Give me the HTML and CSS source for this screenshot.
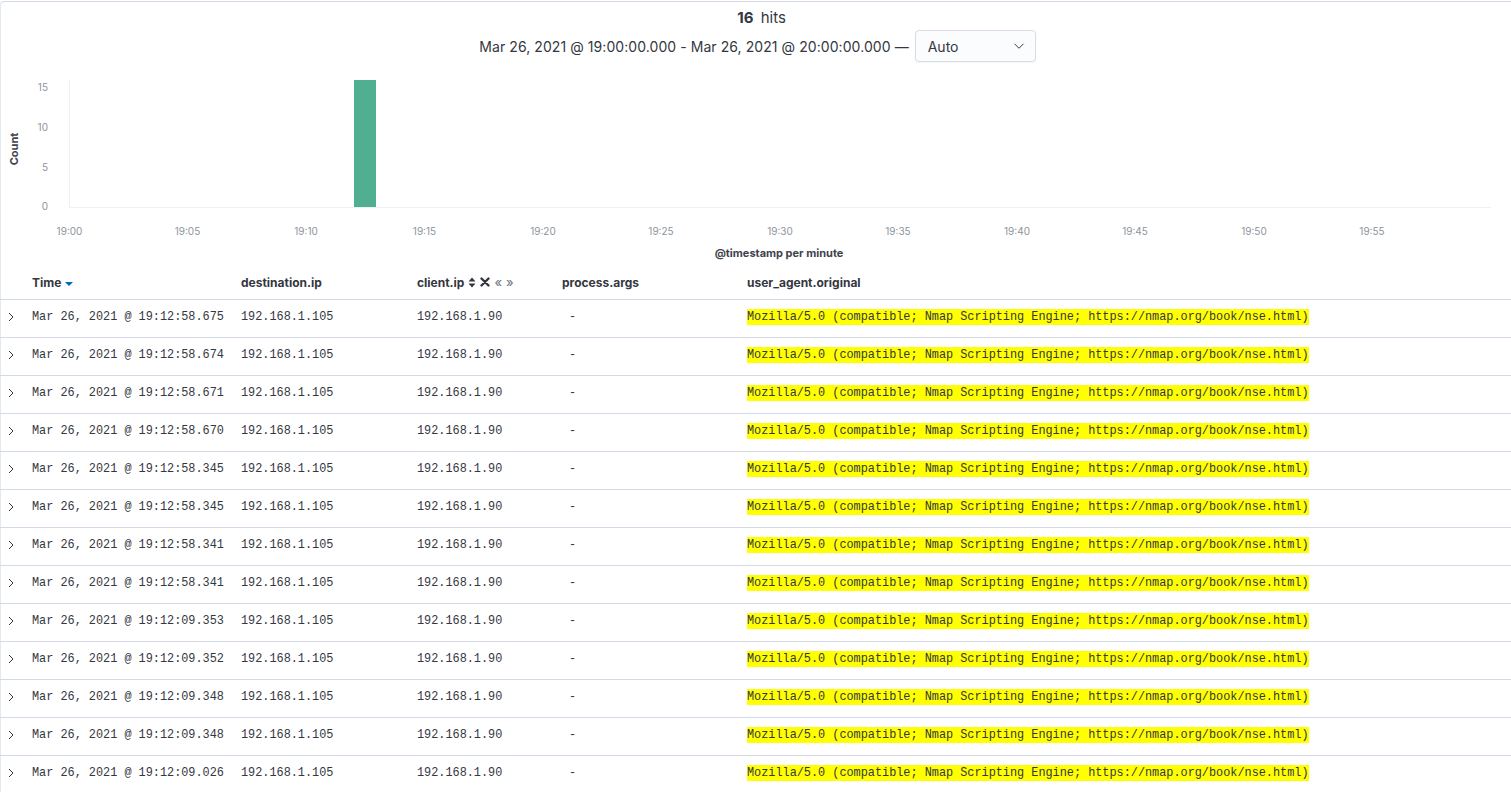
FILE: index.html
```html
<!DOCTYPE html>
<html>
<head>
<meta charset="utf-8">
<link rel="stylesheet" href="styles.css">
</head>
<body>
<div class="panel">
  <div class="summary">
    <div class="hits"><strong>16</strong> hits</div>
    <div class="range">
      <span>Mar 26, 2021 @ 19:00:00.000 - Mar 26, 2021 @ 20:00:00.000 —</span>
      <div class="select"><span>Auto</span>
        <svg width="12" height="12" viewBox="0 0 16 16"><path d="M2 5l6 6 6-6" fill="none" stroke="#343741" stroke-width="1.3"/></svg>
      </div>
    </div>
  </div>
  <svg class="chart" width="1511" height="200" viewBox="0 0 1511 200">
    <line x1="69.5" y1="15" x2="69.5" y2="142" stroke="#eef0f3" stroke-width="1"/>
    <line x1="69" y1="142.5" x2="1491" y2="142.5" stroke="#eef0f3" stroke-width="1"/>
    <rect x="354" y="15" width="22" height="127" fill="#50ae91"/>
    <g class="ytick" text-anchor="end">
      <text x="48" y="26">15</text>
      <text x="48" y="66">10</text>
      <text x="48" y="106">5</text>
      <text x="48" y="145">0</text>
    </g>
    <text class="ytitle" transform="translate(18 84) rotate(-90)" text-anchor="middle">Count</text>
    <g class="xtick" text-anchor="middle">
      <text x="69.5" y="170">19:00</text>
      <text x="187.5" y="170">19:05</text>
      <text x="306" y="170">19:10</text>
      <text x="424.5" y="170">19:15</text>
      <text x="543" y="170">19:20</text>
      <text x="661" y="170">19:25</text>
      <text x="780" y="170">19:30</text>
      <text x="898" y="170">19:35</text>
      <text x="1017" y="170">19:40</text>
      <text x="1135" y="170">19:45</text>
      <text x="1254" y="170">19:50</text>
      <text x="1372" y="170">19:55</text>
    </g>
    <text class="xtitle" x="779" y="192" text-anchor="middle">@timestamp per minute</text>
  </svg>
  <div class="table">
    <div class="row head">
      <div class="cell toggle"></div>
      <div class="cell">Time <span class="sortdown"></span></div>
      <div class="cell">destination.ip</div>
      <div class="cell">client.ip <span class="ico">
        <svg width="8" height="11" viewBox="0 0 8 11"><path d="M4 0.5L7.5 4.5H0.5z M4 10.5L7.5 6.5H0.5z" fill="#343741"/></svg>
        <svg width="10" height="10" viewBox="0 0 10 10"><path d="M1.5 1.5l7 7M8.5 1.5l-7 7" stroke="#343741" stroke-width="2.4" stroke-linecap="round"/></svg>
        <span class="arr">«</span><span class="arr">»</span></span></div>
      <div class="cell">process.args</div>
      <div class="cell">user_agent.original</div>
    </div>
    <div id="rows"></div>
  </div>
</div>
<script src="script.js"></script>
</body>
</html>
```

FILE: script.js
```js
const times = [
  "19:12:58.675","19:12:58.674","19:12:58.671","19:12:58.670","19:12:58.345",
  "19:12:58.345","19:12:58.341","19:12:58.341","19:12:09.353","19:12:09.352",
  "19:12:09.348","19:12:09.348","19:12:09.026"
];
const ua = "Mozilla/5.0 (compatible; Nmap Scripting Engine; https://nmap.org/book/nse.html)";
const rows = document.getElementById("rows");
rows.innerHTML = times.map(t => `
  <div class="row">
    <div class="cell toggle"><svg width="12" height="12" viewBox="0 0 12 12"><path d="M4 2l4 4-4 4" fill="none" stroke="#343741" stroke-width="1"/></svg></div>
    <div class="cell mono">Mar 26, 2021 @ ${t}</div>
    <div class="cell mono">192.168.1.105</div>
    <div class="cell mono">192.168.1.90</div>
    <div class="cell mono dash">-</div>
    <div class="cell mono"><mark>${ua}</mark></div>
  </div>`).join("");
```

FILE: styles.css
```css
html, body {
  margin: 0;
  padding: 0;
  background: #fff;
  overflow: hidden;
}
body {
  font-family: Inter, "Liberation Sans", sans-serif;
  color: #343741;
}
.panel {
  margin-top: 1px;
  border-top: 1px solid #d3dae6;
  border-top-left-radius: 4px;
  box-shadow: inset 1px 0 0 #e4e8ef;
  height: 800px;
}
.summary {
  display: flex;
  flex-direction: column;
  align-items: center;
  padding-top: 5px;
}
.hits {
  font-size: 15px;
  line-height: 22px;
  margin-left: 12px;
}
.hits strong {
  font-weight: 700;
  margin-right: 3px;
}
.range {
  display: flex;
  align-items: center;
  gap: 6px;
  font-size: 14px;
  letter-spacing: 0.07px;
  margin-top: 1px;
  margin-left: 4px;
}
.select {
  width: 121px;
  height: 32px;
  border: 1px solid #d7dde7;
  border-radius: 4px;
  background: #fbfcfd;
  display: flex;
  align-items: center;
  justify-content: space-between;
  padding: 0 10px 0 12px;
  box-sizing: border-box;
  box-shadow: 0 1px 2px rgba(0,0,0,0.04);
  letter-spacing: 0;
}
.chart {
  display: block;
  margin-top: 3px;
  font-family: Inter, "Liberation Sans", sans-serif;
}
.ytick text, .xtick text {
  font-size: 10px;
  fill: #8d939c;
}
.ytitle, .xtitle {
  font-size: 11px;
  font-weight: 700;
  fill: #3f434d;
}
.table {
  display: flex;
  flex-direction: column;
}
.row {
  display: grid;
  grid-template-columns: 32px 209px 176px 145px 185px 1fr;
  height: 37px;
  box-sizing: content-box;
  border-bottom: 1px solid #d3dae6;
  align-items: center;
}
#rows .row {
  height: 34px;
  padding-bottom: 3px;
}
.row.head {
  height: 34px;
  font-size: 12px;
  font-weight: 700;
}
.cell {
  white-space: nowrap;
  display: flex;
  align-items: center;
}
.toggle {
  padding-left: 5px;
}
.mono {
  font-family: "Liberation Mono", monospace;
  font-size: 11.85px;
  color: #343741;
}
.dash {
  padding-left: 7px;
}
mark {
  background: #ffff00;
  color: #343741;
  padding: 1px 0;
}
.sortdown {
  display: inline-block;
  width: 0;
  height: 0;
  border-left: 4px solid transparent;
  border-right: 4px solid transparent;
  border-top: 4px solid #006bb4;
  margin-left: 4px;
  margin-top: 3px;
}
.ico {
  display: inline-flex;
  align-items: center;
  gap: 4px;
  margin-left: 4px;
}
.arr {
  font-weight: 400;
  color: #69707d;
  font-size: 13px;
}
```
